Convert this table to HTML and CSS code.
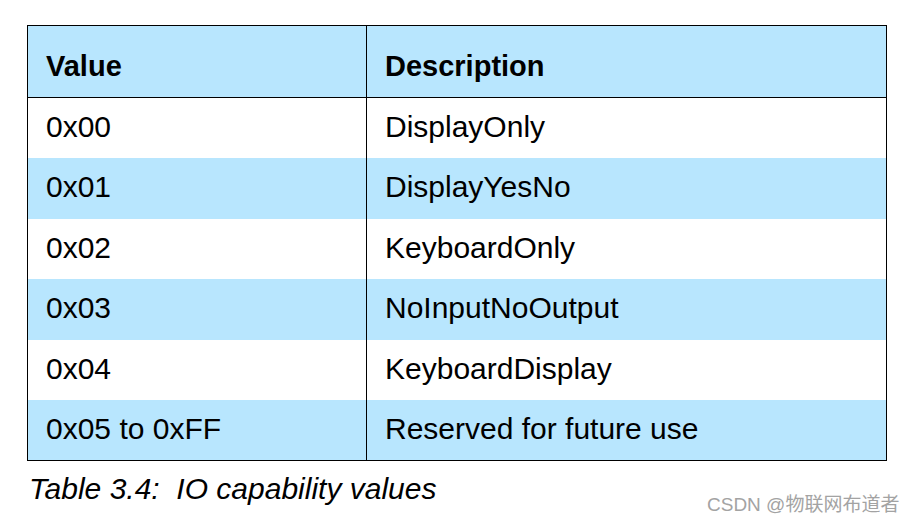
FILE: index.html
```html
<!DOCTYPE html>
<html lang="en">
<head>
<meta charset="utf-8">
<title>IO capability values</title>
<link rel="stylesheet" href="styles.css">
</head>
<body>
<div class="page">
  <table class="io-table">
    <colgroup>
      <col class="col-value">
      <col class="col-desc">
    </colgroup>
    <thead>
      <tr class="head-row">
        <th>Value</th>
        <th>Description</th>
      </tr>
    </thead>
    <tbody>
      <tr class="row white"><td>0x00</td><td>DisplayOnly</td></tr>
      <tr class="row blue tall"><td>0x01</td><td>DisplayYesNo</td></tr>
      <tr class="row white"><td>0x02</td><td>KeyboardOnly</td></tr>
      <tr class="row blue tall"><td>0x03</td><td>NoInputNoOutput</td></tr>
      <tr class="row white"><td>0x04</td><td>KeyboardDisplay</td></tr>
      <tr class="row blue tall"><td>0x05 to 0xFF</td><td>Reserved for future use</td></tr>
    </tbody>
  </table>
  <p class="caption">Table 3.4:&nbsp; IO capability values</p>
</div>
<div class="watermark">CSDN @物联网布道者</div>
</body>
</html>
```

FILE: styles.css
```css
html, body {
  margin: 0;
  padding: 0;
  background: #ffffff;
}

body {
  width: 913px;
  height: 522px;
  position: relative;
  overflow: hidden;
  font-family: "Liberation Sans", Arial, sans-serif;
  color: #000000;
}

.page {
  padding: 25px 0 0 27px;
}

.io-table {
  border-collapse: collapse;
  table-layout: fixed;
  width: 859px;
  border: 1.5px solid #000000;
}

.col-value {
  width: 339px;
}

.col-desc {
  width: 520px;
}

.io-table th,
.io-table td {
  border-left: 1.5px solid #000000;
  border-right: 1.5px solid #000000;
  text-align: left;
  vertical-align: middle;
  white-space: nowrap;
}

.io-table th {
  font-weight: bold;
  font-size: 29px;
  height: 72px;
  box-sizing: border-box;
  padding: 9px 0 0 18px;
  background: #b8e6fe;
  border-bottom: 1.5px solid #000000;
}

.io-table td {
  font-size: 30px;
  height: 60px;
  box-sizing: border-box;
  padding: 0 0 2px 18px;
}

.row.tall td {
  height: 61px;
}

.row.white td {
  background: #ffffff;
}

.row.blue td {
  background: #b8e6fe;
}

.caption {
  margin: 11px 0 0 2px;
  font-style: italic;
  font-size: 30px;
}

.watermark {
  position: absolute;
  left: 707px;
  top: 489px;
  font-family: "Liberation Sans", "Noto Sans CJK SC", sans-serif;
  font-size: 19px;
  color: #a3a3a3;
  white-space: nowrap;
}
```
